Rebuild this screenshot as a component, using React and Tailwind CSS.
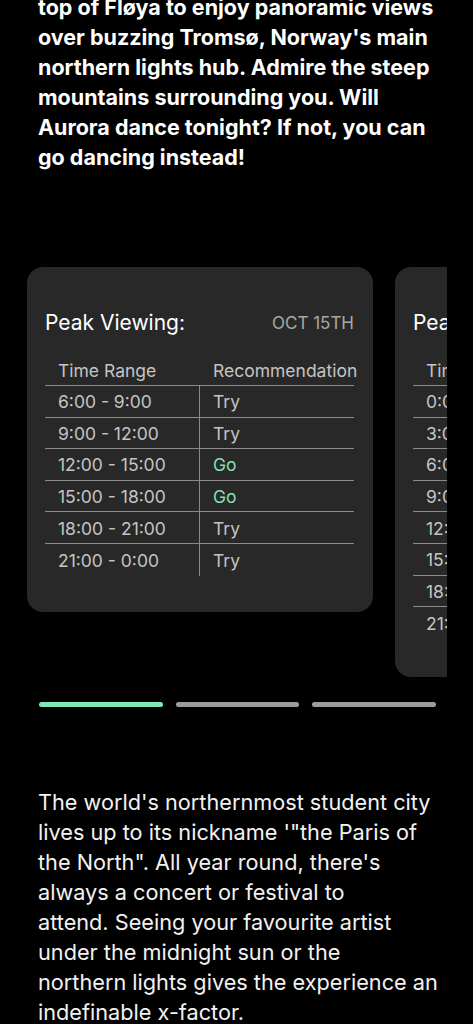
import React from "react";

const dayOne = [
  ["6:00 - 9:00", "Try"],
  ["9:00 - 12:00", "Try"],
  ["12:00 - 15:00", "Go"],
  ["15:00 - 18:00", "Go"],
  ["18:00 - 21:00", "Try"],
  ["21:00 - 0:00", "Try"],
];

const dayTwo = [
  ["0:00 - 3:00", "Try"],
  ["3:00 - 6:00", "Try"],
  ["6:00 - 9:00", "Try"],
  ["9:00 - 12:00", "Try"],
  ["12:00 - 15:00", "Go"],
  ["15:00 - 18:00", "Go"],
  ["18:00 - 21:00", "Try"],
  ["21:00 - 0:00", "Try"],
];

const PeakCard = ({ date, rows, pb }) => (
  <div
    className={`w-[346px] shrink-0 rounded-[16px] bg-[#282828] pl-[18px] pr-[19px] pt-[43px] ${pb}`}
  >
    <div className="flex items-center justify-between whitespace-nowrap">
      <h2 className="text-[21px] leading-[26px] text-white">Peak Viewing:</h2>
      <span className="text-[17px] leading-[26px] text-[#a8a8a8]">{date}</span>
    </div>

    <div className="mt-[20px] text-[17.5px] text-[#c4c4c4]">
      {/* header */}
      <div className="flex h-[30px] items-center border-b border-[#8a8a8a] pt-[2px] whitespace-nowrap">
        <div className="w-[154px] shrink-0 pl-[13px]">Time Range</div>
        <div className="pl-[14px]">Recommendation</div>
      </div>

      {rows.map(([range, rec], i) => (
        <div
          key={range}
          className={`flex h-[31.6px] items-center whitespace-nowrap ${
            i < rows.length - 1 ? "border-b border-[#8a8a8a]" : ""
          }`}
        >
          <div className="w-[154px] shrink-0 pl-[13px] pt-[2px]">{range}</div>
          <div
            className={`flex h-full flex-1 items-center border-l border-[#8a8a8a] pl-[13px] pt-[2px] ${
              rec === "Go" ? "text-[#7fe0b0]" : ""
            }`}
          >
            {rec}
          </div>
        </div>
      ))}
    </div>
  </div>
);

export default function App() {
  return (
    <div
      className="min-h-screen overflow-hidden bg-black text-white"
      style={{ fontFamily: "Inter, 'Noto Sans', sans-serif" }}
    >
      {/* intro text */}
      <p className="-mt-[8px] px-[38px] text-[21.5px] font-bold leading-[30px]">
        top of Fløya to enjoy panoramic views over buzzing Tromsø, Norway's
        main northern lights hub. Admire the steep mountains surrounding you.
        Will Aurora dance tonight? If not, you can go dancing instead!
      </p>

      {/* carousel */}
      <div className="ml-[27px] mr-[26px] mt-[95px] flex items-start gap-[22px] overflow-hidden">
        <PeakCard date="OCT 15TH" rows={dayOne} pb="pb-[36px]" />
        <PeakCard date="OCT 16TH" rows={dayTwo} pb="pb-[38px]" />
      </div>

      {/* progress */}
      <div className="ml-[39px] mr-[37px] mt-[25px] flex gap-[13px]">
        <div className="h-[5px] flex-1 rounded-full bg-[#7ee8b6]" />
        <div className="h-[5px] flex-1 rounded-full bg-[#9c9c9c]" />
        <div className="h-[5px] flex-1 rounded-full bg-[#9c9c9c]" />
      </div>

      {/* second text */}
      <p className="mt-[80px] pl-[38px] pr-[20px] text-[21.7px] leading-[30px] whitespace-nowrap text-[#f2f2f2]">
        The world's northernmost student city
        <br />
        lives up to its nickname '"the Paris of
        <br />
        the North". All year round, there's
        <br />
        always a concert or festival to
        <br />
        attend. Seeing your favourite artist
        <br />
        under the midnight sun or the
        <br />
        northern lights gives the experience an
        <br />
        indefinable x-factor.
      </p>
    </div>
  );
}
